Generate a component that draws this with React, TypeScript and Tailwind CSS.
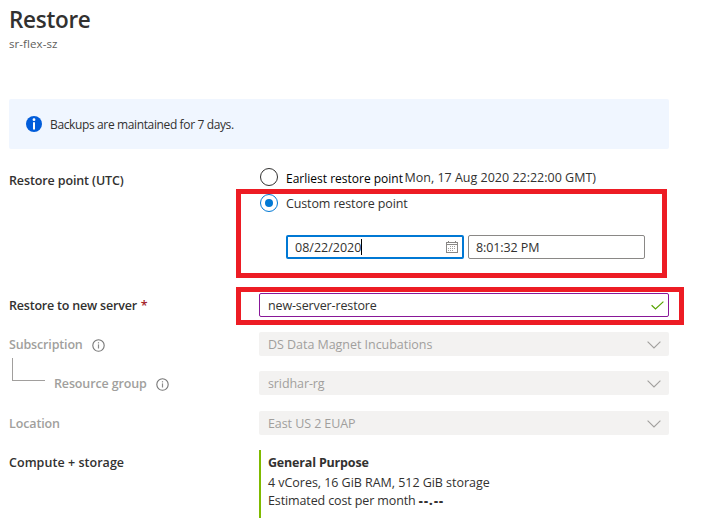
import type { ReactNode } from 'react';

function InfoOutline() {
  return (
    <svg className="h-[13px] w-[13px] shrink-0" viewBox="0 0 13 13" fill="none">
      <circle cx="6.5" cy="6.5" r="5.7" stroke="#767676" strokeWidth="1.1" />
      <path d="M6.5 5.4V9.5" stroke="#8a8a8a" strokeWidth="1.2" />
      <path d="M6.5 3.2V4.4" stroke="#8a8a8a" strokeWidth="1.2" />
    </svg>
  );
}

function CalendarIcon() {
  return (
    <svg className="h-[12px] w-[12px] shrink-0" viewBox="0 0 12 12" fill="none" shapeRendering="crispEdges">
      <path d="M0.5 1.5H11.5V11.5H0.5Z" stroke="#8a8886" />
      <path d="M1 3.5H11" stroke="#8a8886" />
      <path d="M2.5 0V2M9.5 0V2" stroke="#8a8886" />
      <path d="M4 5.5H10M2 7.5H10M2 9.5H8" stroke="#a19f9d" strokeDasharray="1 1" />
    </svg>
  );
}

function Chevron() {
  return (
    <svg className="mt-px h-[8px] w-[14px] shrink-0" viewBox="0 0 14 8" fill="none">
      <path d="M0.6 0.7L7 7L13.4 0.7" stroke="#a19f9d" strokeWidth="1.1" />
    </svg>
  );
}

function Label({ className, children }: { className: string; children: ReactNode }) {
  return <div className={`flex h-[26px] w-[250px] shrink-0 items-center whitespace-nowrap font-[550] ${className}`}>{children}</div>;
}

function DisabledSelect({ className, children }: { className: string; children: ReactNode }) {
  return (
    <div className="flex h-6 w-[410px] items-center justify-between rounded-[2px] bg-[#f3f2f1] pl-[9px] pr-[8px] text-[#a19f9d]">
      <span className={`pt-[2px] leading-[24px] ${className}`}>{children}</span>
      <Chevron />
    </div>
  );
}

export default function App() {
  return (
    <div className="relative h-[530px] w-[703px] overflow-hidden whitespace-nowrap bg-white pl-[9px] font-['Open_Sans','Noto_Sans',sans-serif] text-[12.5px] leading-[24px] text-[#323130]">
      <h1 className="h-[34px] pt-[4px] text-[22.5px] font-semibold leading-[32px] tracking-[-0.3px]">Restore</h1>
      <p className="h-[65px] text-[11.5px] leading-[20px] tracking-[0.08px] text-[#605e5c]">sr-flex-sz</p>

      <div className="flex h-[50px] w-[660px] items-center gap-[8px] rounded-[2px] bg-[#f0f6ff] pl-[17px]">
        <svg className="h-4 w-4 shrink-0" viewBox="0 0 16 16">
          <circle cx="8" cy="8" r="8" fill="#015cda" />
          <circle cx="8" cy="3.7" r="1.4" fill="#fff" />
          <path d="M7 6.2H9V13.6H7Z" fill="#fff" />
        </svg>
        <span className="pt-[2px] text-[12px] tracking-[-0.37px]">Backups are maintained for 7 days.</span>
      </div>

      <div className="flex h-[144px] pt-[16px]">
        <Label className="mt-[3px] tracking-[-0.12px]">Restore point (UTC)</Label>
        <div className="flex flex-col">
          <div className="flex h-[25px] items-center">
            <span className="-mt-px ml-px h-[18px] w-[18px] rounded-full border border-[#323130]" />
            <span className="mt-[3px] w-[119px] pl-[8px] text-[12px] text-black">Earliest restore point</span>
            <span className="pl-[7.5px]">Mon, 17 Aug 2020 22:22:00 GMT)</span>
          </div>
          <div className="flex h-[27px] items-center">
            <span className="-mt-px ml-px flex h-[18px] w-[18px] items-center justify-center rounded-full border border-[#0078d4]">
              <span className="h-[8px] w-[8px] rounded-full bg-[#0078d4]" />
            </span>
            <span className="pl-[8px] tracking-[-0.13px]">Custom restore point</span>
          </div>
          <div className="mt-[18px] flex gap-[4px] pl-[27px]">
            <div className="flex h-6 w-[178px] items-center rounded-[2px] border-2 border-[#0078d4] pl-[7px] pr-[4px]">
              <span className="pt-[2px]">08/22/2020</span>
              <span className="h-[16px] w-px bg-black" />
              <span className="ml-auto"><CalendarIcon /></span>
            </div>
            <div className="flex h-6 w-[177px] items-center rounded-[2px] border border-[#8a8886] pl-[7px] pt-[2px] tracking-[-0.1px]">8:01:32 PM</div>
          </div>
        </div>
      </div>

      <div className="flex h-[39px]">
        <Label className="tracking-[-0.2px]">
          Restore to new server<span className="pl-1 text-[#a4262c]">*</span>
        </Label>
        <div className="flex h-6 w-[410px] items-center justify-between rounded-[2px] border border-[#881798] pl-[8px] pr-[4px]">
          <span className="pt-[2px] tracking-[-0.13px]">new-server-restore</span>
          <svg className="h-[9px] w-[13px]" viewBox="0 0 13 9" fill="none">
            <path d="M0.6 4.2L4.5 8L12.4 0.6" stroke="#57a300" strokeWidth="1.2" />
          </svg>
        </div>
      </div>

      <div className="flex h-[39px]">
        <Label className="gap-[9px] tracking-[-0.16px] text-[#a19f9d]">Subscription <InfoOutline /></Label>
        <DisabledSelect className="tracking-[-0.04px]">DS Data Magnet Incubations</DisabledSelect>
      </div>

      <div className="flex h-[40px]">
        <Label className="gap-[9px] tracking-[-0.14px] text-[#a19f9d]">
          <span className="-mt-[29px] ml-[3px] h-[23px] w-[33px] border-b border-l border-[#a19f9d]" />
          <span>Resource group</span>
          <InfoOutline />
        </Label>
        <DisabledSelect className="tracking-[-0.1px]">sridhar-rg</DisabledSelect>
      </div>

      <div className="flex h-[39px]">
        <Label className="tracking-[-0.12px] text-[#a19f9d]">Location</Label>
        <DisabledSelect className="tracking-[-0.08px]">East US 2 EUAP</DisabledSelect>
      </div>

      <div className="flex">
        <Label className="tracking-[0.04px]">Compute + storage</Label>
        <div className="h-[68px] border-l-2 border-[#7fba00] pl-[7px] leading-[18px]">
          <div className="pt-[3px] font-bold leading-[20px] tracking-[-0.18px]">General Purpose</div>
          <div className="pt-px tracking-[-0.04px]">4 vCores, 16 GiB RAM, 512 GiB storage</div>
          <div className="tracking-[-0.12px]">
            Estimated cost per month <span className="font-extrabold tracking-[1.2px]">--.--</span>
          </div>
        </div>
      </div>

      <div className="absolute left-[236px] top-[189px] h-[89px] w-[431px] border-[5px] border-[#ed1c24]" />
      <div className="absolute left-[236px] top-[287px] h-[38px] w-[448px] border-[5px] border-[#ed1c24]" />
    </div>
  );
}
